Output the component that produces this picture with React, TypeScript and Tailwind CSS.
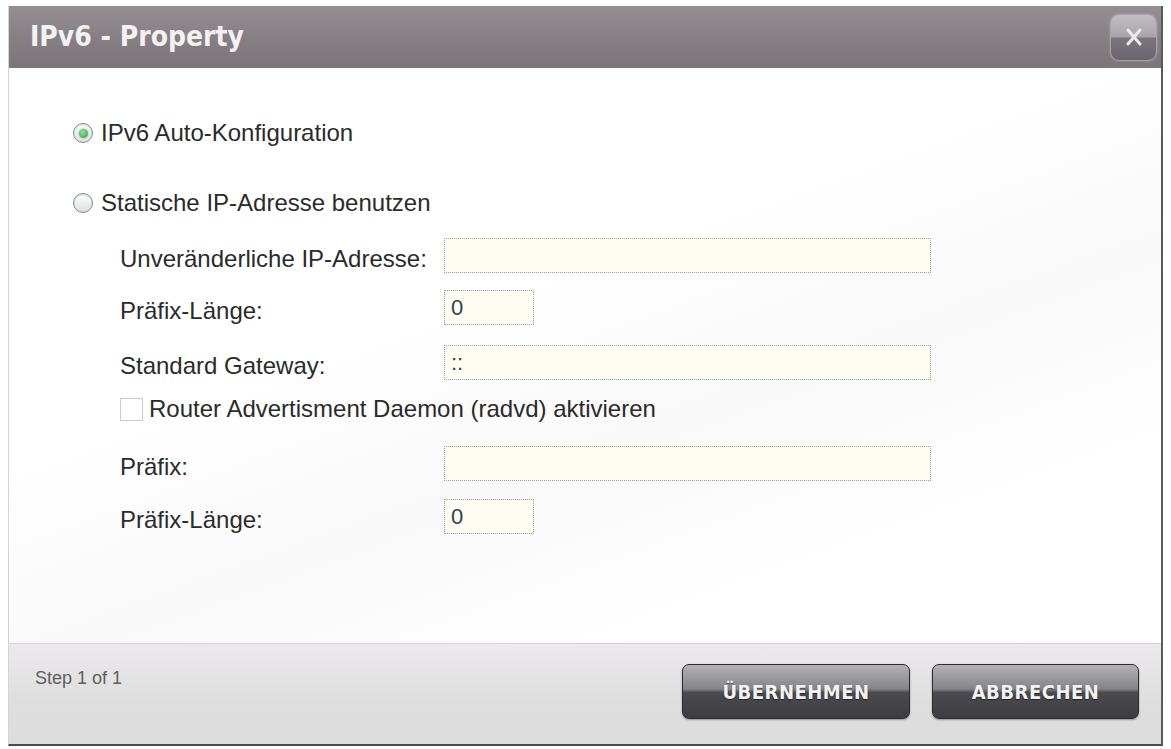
import React from "react";

const sans = { fontFamily: '"Liberation Sans", Arial, sans-serif' };
const cond = { fontFamily: '"DejaVu Sans Condensed", "DejaVu Sans", sans-serif', fontStretch: "condensed" };

function Radio({ checked }: { checked?: boolean }) {
  return (
    <span className="flex h-[20px] w-[20px] shrink-0 items-center justify-center rounded-full border border-[#7f8c8c] bg-[linear-gradient(to_bottom,#ffffff,#dcdfdf)] shadow-[inset_0_1px_1px_rgba(0,0,0,0.15)]">
      {checked && (
        <span className="h-[9px] w-[9px] rounded-full bg-[radial-gradient(circle_at_40%_35%,#8fe09c,#2f9c46)] shadow-[0_0_2px_#58b86a]" />
      )}
    </span>
  );
}

function Field({ label, value, short }: { label: string; value?: string; short?: boolean }) {
  return (
    <div className="flex h-[35px] items-center pl-[47px]">
      <span className="w-[324px] shrink-0 pt-[6px] text-[24px] leading-none text-[#2b2b2b]">{label}</span>
      <div
        className={`flex h-[35px] items-center border border-dotted border-[#9b9b9b] bg-[#fffdf3] pl-[6px] text-[22px] text-[#34424a] ${
          short ? "w-[90px]" : "w-[487px]"
        }`}
      >
        {value}
      </div>
    </div>
  );
}

function DarkButton({ children, w }: { children: React.ReactNode; w: string }) {
  return (
    <button
      className={`${w} flex h-[55px] items-center justify-center rounded-[7px] border border-[#2c2c30] bg-[linear-gradient(to_bottom,#b3b3b5_0%,#858589_45%,#4a4a4f_52%,#3c3c41_100%)] text-[20px] font-bold tracking-[0.5px] text-[#f2f2f2] shadow-[0_1px_2px_rgba(0,0,0,0.35)] [text-shadow:0_1px_1px_rgba(0,0,0,0.5)]`}
      style={cond}
    >
      {children}
    </button>
  );
}

export default function App() {
  return (
    <div className="min-h-[749px] bg-white pl-[8px] pt-[6px]" style={sans}>
      <div className="flex h-[740px] w-[1155px] flex-col border-b-2 border-l border-r-2 border-b-[#4a4a4a] border-l-[#d4d4d4] border-r-[#5a5a5a] bg-white">
        {/* title bar */}
        <div className="flex h-[62px] shrink-0 items-center justify-between bg-[linear-gradient(to_bottom,#958e92,#857e82_55%,#7b7478)] pl-[21px] pr-[4px]">
          <span className="text-[28px] font-bold text-[#f3f1f2]" style={cond}>
            IPv6 - Property
          </span>
          <button className="flex h-[47px] w-[47px] items-center justify-center rounded-[9px] border border-[#a7a2a7] bg-[linear-gradient(to_bottom,#c2bdc2_0%,#aaa5aa_48%,#7a747c_52%,#6b656e_100%)] shadow-[0_0_2px_rgba(255,255,255,0.4)]">
            <svg width="22" height="22" viewBox="0 0 22 22">
              <path d="M5 4 L17 18 M17 4 L5 18" stroke="#ebe8eb" strokeWidth="3" strokeLinecap="round" />
            </svg>
          </button>
        </div>

        {/* body */}
        <div className="flex flex-1 flex-col bg-[linear-gradient(160deg,#ffffff_40%,#f9f9f9_60%,#ffffff_80%)] pl-[64px]">
          <label className="mt-[50px] flex h-[30px] items-center gap-[8px]">
            <Radio checked />
            <span className="text-[24px] text-[#2b2b2b]">IPv6 Auto-Konfiguration</span>
          </label>
          <label className="mt-[40px] flex h-[30px] items-center gap-[8px]">
            <Radio />
            <span className="text-[24px] text-[#2b2b2b]">Statische IP-Adresse benutzen</span>
          </label>

          <div className="mt-[20px]">
            <Field label="Unveränderliche IP-Adresse:" />
          </div>
          <div className="mt-[17px]">
            <Field label="Präfix-Länge:" value="0" short />
          </div>
          <div className="mt-[20px]">
            <Field label="Standard Gateway:" value="::" />
          </div>
          <label className="mt-[14px] flex h-[30px] items-center gap-[6px] pl-[47px]">
            <span className="h-[23px] w-[23px] border border-[#cacaca] bg-white" />
            <span className="text-[24px] text-[#2b2b2b]">Router Advertisment Daemon (radvd) aktivieren</span>
          </label>
          <div className="mt-[22px]">
            <Field label="Präfix:" />
          </div>
          <div className="mt-[18px]">
            <Field label="Präfix-Länge:" value="0" short />
          </div>
        </div>

        {/* footer */}
        <div className="flex h-[101px] shrink-0 items-start justify-between border-t border-[#d6d6d6] bg-[linear-gradient(to_bottom,#ece9ec,#dedede_60%,#dcdcdc)] pl-[26px] pr-[22px]">
          <span className="mt-[21px] text-[18px] text-[#5e5e5e]">Step 1 of 1</span>
          <div className="mt-[20px] flex gap-[22px]">
            <DarkButton w="w-[228px]">ÜBERNEHMEN</DarkButton>
            <DarkButton w="w-[207px]">ABBRECHEN</DarkButton>
          </div>
        </div>
      </div>
    </div>
  );
}
